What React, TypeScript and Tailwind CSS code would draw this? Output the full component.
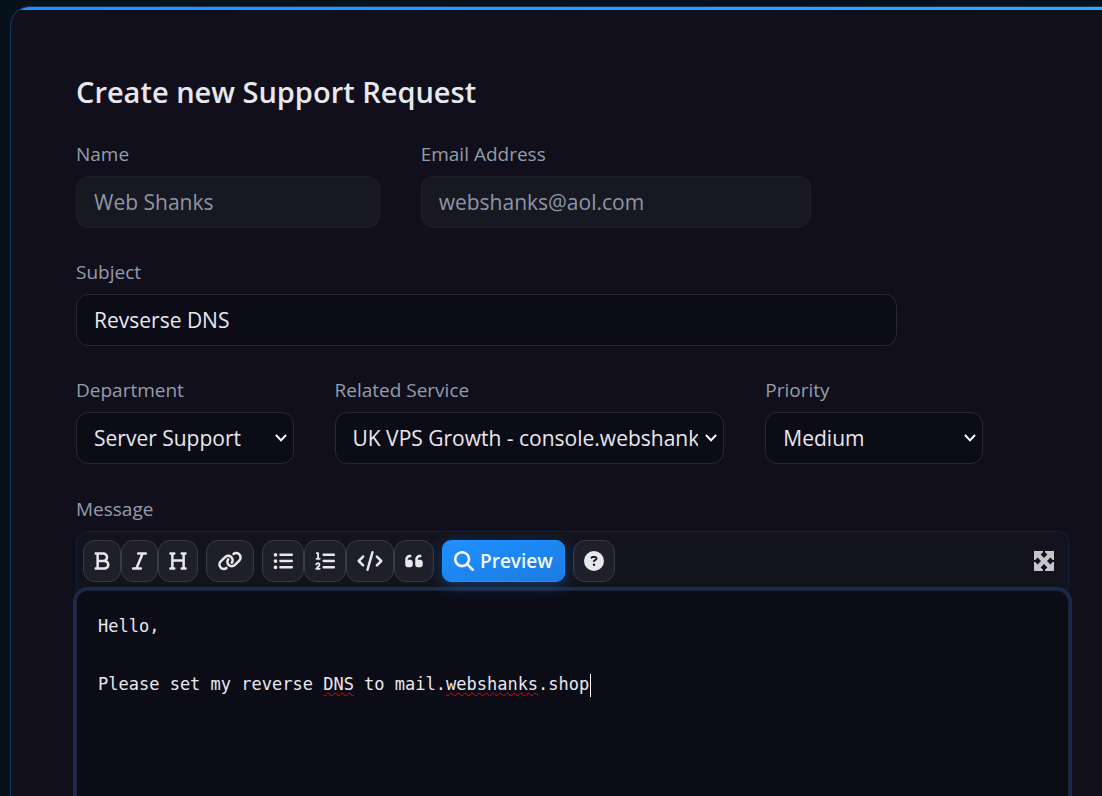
import { useState } from "react";
import {
  FaBold,
  FaCircleQuestion,
  FaCode,
  FaHeading,
  FaItalic,
  FaLink,
  FaListOl,
  FaListUl,
  FaMagnifyingGlass,
  FaQuoteLeft
} from "react-icons/fa6";
import type { IconType } from "react-icons";

const inputClass = "h-[52px] w-full rounded-xl border px-[17px] text-[21px] leading-7 outline-none";
const editableClass = "border-[#282832] bg-[#0c0c17] text-[#e8e8ee]";
const disabledClass = "border-[#1f1f2b] bg-[#181823] text-[#8d96a5]";
const messageClass = "col-start-1 row-start-1 w-full whitespace-pre-wrap px-[21px] py-[21px] font-['DejaVu_Sans_Mono',monospace] text-[17px] leading-[29px]";
const unknownWords = ["DNS", "webshanks"];

type Tool = { label: string; icon: IconType; size: string };

const toolGroups: Tool[][] = [
  [
    { label: "Bold", icon: FaBold, size: "w-4" },
    { label: "Italic", icon: FaItalic, size: "w-[15px]" },
    { label: "Heading", icon: FaHeading, size: "w-[18px]" }
  ],
  [{ label: "Link", icon: FaLink, size: "w-[26px]" }],
  [
    { label: "Unordered list", icon: FaListUl, size: "w-5" },
    { label: "Ordered list", icon: FaListOl, size: "w-5" },
    { label: "Code", icon: FaCode, size: "w-[26px]" },
    { label: "Quote", icon: FaQuoteLeft, size: "w-[18px]" }
  ]
];

export default function App() {
  const [subject, setSubject] = useState("Revserse DNS");
  const [message, setMessage] = useState("Hello,\n\nPlease set my reverse DNS to mail.webshanks.shop");

  return (
    <div className="flex min-h-screen flex-col overflow-hidden bg-[#07111c] pl-2.5 pt-1.5 font-['Open_Sans',sans-serif]">
      <main className="relative flex flex-1 flex-col overflow-hidden rounded-tl-[20px] border-l border-t border-[#12365f] bg-[#100f1b] pl-[65px] pr-[33px]">
        <div className="absolute inset-x-0 top-0 h-[3px] bg-linear-to-r from-[#1e90ff] to-[#2fa8ff]" />
        <h1 className="mb-7 mt-[65px] text-[29px] font-semibold leading-10 text-[#e8e8ec]">Create new Support Request</h1>
        <form className="flex flex-1 flex-col gap-[31px]" onSubmit={(event) => event.preventDefault()}>
          <div className="grid grid-cols-12 gap-x-[41px] gap-y-[30px]">
            <Field id="name" label="Name" className="col-span-4">
              <input id="name" disabled defaultValue="Web Shanks" className={`${inputClass} ${disabledClass}`} />
            </Field>
            <Field id="email" label="Email Address" className="col-span-5">
              <input id="email" type="email" disabled defaultValue="webshanks@aol.com" className={`${inputClass} ${disabledClass}`} />
            </Field>
            <Field id="subject" label="Subject" className="col-span-10 col-start-1">
              <input id="subject" value={subject} onChange={(event) => setSubject(event.target.value)} className={`${inputClass} ${editableClass}`} />
            </Field>
            <Field id="department" label="Department" className="col-span-3 col-start-1">
              <Select id="department" options={["Server Support", "Billing", "Sales"]} />
            </Field>
            <Field id="service" label="Related Service" className="col-span-5">
              <Select id="service" options={["UK VPS Growth - console.webshanks.shop", "None"]} />
            </Field>
            <Field id="priority" label="Priority" className="col-span-3">
              <Select id="priority" options={["Medium", "High", "Low"]} />
            </Field>
          </div>
          <Field id="message" label="Message" className="flex-1">
            <div className="flex flex-1 flex-col">
              <div className="flex items-center gap-2 rounded-t-xl border border-b-0 border-[#11203d] bg-[#13131e] px-1.5 py-2">
                {toolGroups.map((group) => (
                  <div key={group[0].label} className="flex">
                    {group.map((tool) => (
                      <ToolButton key={tool.label} {...tool} />
                    ))}
                  </div>
                ))}
                <button type="button" className="relative flex h-[42px] items-center gap-1.5 rounded-[9px] border border-[#1e90ff] bg-linear-to-br from-[#1e90ff] to-[#1c7ce0] px-[11px] text-[19px] font-semibold text-[#f4f8ff] shadow-[0_4px_16px_rgba(30,144,255,0.3)]">
                  <FaMagnifyingGlass className="size-5" /> Preview
                </button>
                <ToolButton label="Help" icon={FaCircleQuestion} size="w-5" />
                <button type="button" aria-label="Fullscreen" className="ml-auto mr-2 text-[#c6c6c8]">
                  <svg viewBox="0 0 20 20" className="size-5 fill-current" aria-hidden>
                    <path d="M0 0H9V1.2L6.6 3.6L10 7L13.4 3.6L11 1.2V0H20V9H18.8L16.4 6.6L13 10L16.4 13.4L18.8 11H20V20H11V18.8L13.4 16.4L10 13L6.6 16.4L9 18.8V20H0V11H1.2L3.6 13.4L7 10L3.6 6.6L1.2 9H0Z" />
                  </svg>
                </button>
              </div>
              <div className="grid min-h-52 flex-1 rounded-t-xl border border-b-0 border-[#222230] bg-[#0c0c17] shadow-[0_0_0_3px_#152c50]">
                <MessageMarks text={message} />
                <textarea
                  id="message"
                  spellCheck={false}
                  value={message}
                  onChange={(event) => setMessage(event.target.value)}
                  className={`${messageClass} resize-none text-[#e8e8ee] caret-transparent outline-none`}
                />
              </div>
            </div>
          </Field>
        </form>
      </main>
    </div>
  );
}

// Spelling underlines and the text cursor, laid under the textarea
function MessageMarks({ text }: { text: string }) {
  return (
    <div aria-hidden className={`${messageClass} text-transparent`}>
      {text.split(/(\W)/).map((part, index) =>
        unknownWords.includes(part) ? (
          <span key={index} className="underline decoration-[#f00000] decoration-wavy decoration-1 underline-offset-2">{part}</span>
        ) : (
          part
        )
      )}
      <span className="inline-block h-[23px] w-px bg-white align-middle" />
    </div>
  );
}

function ToolButton({ label, icon: Icon, size }: Tool) {
  return (
    <button type="button" aria-label={label} className="flex h-[42px] shrink-0 items-center rounded-xl border border-[#3b3b45] bg-[#1f1f29] px-2.5 text-[#e8e8ec]">
      <Icon className={`h-5 ${size}`} />
    </button>
  );
}

function Select({ id, options }: { id: string; options: string[] }) {
  return (
    <div className="relative">
      <select id={id} className={`${inputClass} ${editableClass} appearance-none pr-[25px]`}>
        {options.map((option) => (
          <option key={option}>{option}</option>
        ))}
      </select>
      <svg viewBox="0 0 12 8" className="pointer-events-none absolute right-[7px] top-[22px] h-2 w-3 fill-none stroke-white stroke-2" aria-hidden>
        <path d="M1 1l5 5.4L11 1" />
      </svg>
    </div>
  );
}

function Field({ id, label, className, children }: { id: string; label: string; className: string; children: React.ReactNode }) {
  return (
    <div className={`flex flex-col gap-2 ${className}`}>
      <label htmlFor={id} className="text-[19px] leading-7 text-[#949dab]">{label}</label>
      {children}
    </div>
  );
}
